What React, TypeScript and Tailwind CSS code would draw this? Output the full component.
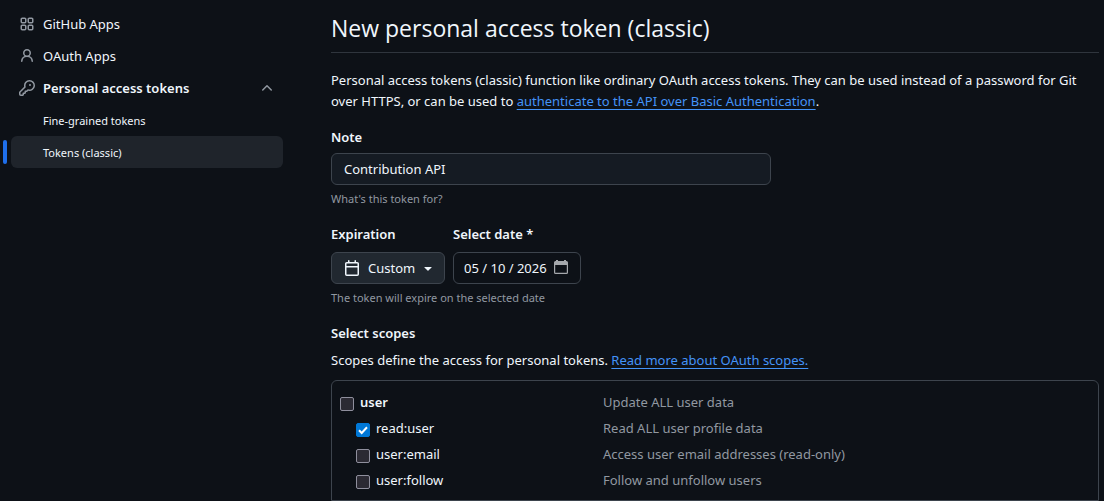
import { useState, type ReactNode } from "react";

const paths = {
  apps: "M1.5 3.25c0-.966.784-1.75 1.75-1.75h2.5c.966 0 1.75.784 1.75 1.75v2.5A1.75 1.75 0 0 1 5.75 7.5h-2.5A1.75 1.75 0 0 1 1.5 5.75Zm7 0c0-.966.784-1.75 1.75-1.75h2.5c.966 0 1.75.784 1.75 1.75v2.5a1.75 1.75 0 0 1-1.75 1.75h-2.5A1.75 1.75 0 0 1 8.5 5.75Zm-7 7c0-.966.784-1.75 1.75-1.75h2.5c.966 0 1.75.784 1.75 1.75v2.5a1.75 1.75 0 0 1-1.75 1.75h-2.5a1.75 1.75 0 0 1-1.75-1.75Zm7 0c0-.966.784-1.75 1.75-1.75h2.5c.966 0 1.75.784 1.75 1.75v2.5a1.75 1.75 0 0 1-1.75 1.75h-2.5a1.75 1.75 0 0 1-1.75-1.75ZM3.25 3a.25.25 0 0 0-.25.25v2.5c0 .138.112.25.25.25h2.5A.25.25 0 0 0 6 5.75v-2.5A.25.25 0 0 0 5.75 3Zm7 0a.25.25 0 0 0-.25.25v2.5c0 .138.112.25.25.25h2.5a.25.25 0 0 0 .25-.25v-2.5a.25.25 0 0 0-.25-.25Zm-7 7a.25.25 0 0 0-.25.25v2.5c0 .138.112.25.25.25h2.5a.25.25 0 0 0 .25-.25v-2.5a.25.25 0 0 0-.25-.25Zm7 0a.25.25 0 0 0-.25.25v2.5c0 .138.112.25.25.25h2.5a.25.25 0 0 0 .25-.25v-2.5a.25.25 0 0 0-.25-.25Z",
  person:
    "M10.561 8.073a6.005 6.005 0 0 1 3.432 5.142.75.75 0 1 1-1.498.07 4.5 4.5 0 0 0-8.99 0 .75.75 0 0 1-1.498-.07 6.004 6.004 0 0 1 3.431-5.142 3.999 3.999 0 1 1 5.123 0ZM10.5 5a2.5 2.5 0 1 0-5 0 2.5 2.5 0 0 0 5 0Z",
  key: "M10.5 0a5.499 5.499 0 1 1-1.288 10.848l-.932.932a.749.749 0 0 1-.53.22H7v.75a.749.749 0 0 1-.22.53l-.5.5a.749.749 0 0 1-.53.22H5v.75a.749.749 0 0 1-.22.53l-.5.5a.749.749 0 0 1-.53.22h-2A1.75 1.75 0 0 1 0 14.25v-2c0-.199.079-.389.22-.53l4.932-4.932A5.5 5.5 0 0 1 10.5 0Zm-4 5.5c-.001.431.069.86.205 1.269a.75.75 0 0 1-.181.768L1.5 12.56v1.69c0 .138.112.25.25.25h1.69l.06-.06v-1.19a.75.75 0 0 1 .75-.75h1.19l.06-.06v-1.19a.75.75 0 0 1 .75-.75h1.19l1.023-1.025a.75.75 0 0 1 .768-.18A4 4 0 1 0 6.5 5.5ZM11 6a1 1 0 1 1 0-2 1 1 0 0 1 0 2Z",
  calendar:
    "M4.75 0a.75.75 0 0 1 .75.75V2h5V.75a.75.75 0 0 1 1.5 0V2h1.25c.966 0 1.75.784 1.75 1.75v10.5A1.75 1.75 0 0 1 13.25 16H2.75A1.75 1.75 0 0 1 1 14.25V3.75C1 2.784 1.784 2 2.75 2H4V.75A.75.75 0 0 1 4.75 0ZM2.5 7.5v6.75c0 .138.112.25.25.25h10.5a.25.25 0 0 0 .25-.25V7.5Zm10.75-4H2.75a.25.25 0 0 0-.25.25V6h11V3.75a.25.25 0 0 0-.25-.25Z",
  chevronUp:
    "M3.22 10.53a.749.749 0 0 1 0-1.06l4.25-4.25a.749.749 0 0 1 1.06 0l4.25 4.25a.749.749 0 1 1-1.06 1.06L8 6.811 4.28 10.53a.749.749 0 0 1-1.06 0Z",
  triangleDown:
    "m4.427 7.427 3.396 3.396a.25.25 0 0 0 .354 0l3.396-3.396A.25.25 0 0 0 11.396 7H4.604a.25.25 0 0 0-.177.427Z",
  // Filled header bar with an open body
  datePicker:
    "M3 0h2v1h6V0h2v1h.500A1.500 1.500 0 0 1 15 2.500v10a1.500 1.500 0 0 1-1.500 1.500h-11A1.500 1.500 0 0 1 1 12.500v-10A1.500 1.500 0 0 1 2.500 1H3ZM2.200 5v7.800h11.600V5Z",
};

function Icon({ name, className = "" }: { name: keyof typeof paths; className?: string }) {
  return (
    <svg
      viewBox="0 0 16 16"
      aria-hidden="true"
      fill="currentColor"
      fillRule="evenodd"
      className={`size-4 shrink-0 ${className}`}
    >
      <path d={paths[name]} />
    </svg>
  );
}

const navRow = "flex h-8 w-full items-center gap-2 rounded-md px-2 text-left";

function Sidebar() {
  return (
    <nav aria-label="Developer settings" className="w-[272px] shrink-0">
      <ul>
        <li>
          <a href="#apps" className={navRow}>
            <Icon name="apps" className="text-[#9198a1]" />
            GitHub Apps
          </a>
        </li>
        <li>
          <a href="#oauth" className={navRow}>
            <Icon name="person" className="text-[#9198a1]" />
            OAuth Apps
          </a>
        </li>
        <li>
          <button type="button" aria-expanded="true" className={`${navRow} font-semibold`}>
            <Icon name="key" className="text-[#9198a1]" />
            <span className="grow">Personal access tokens</span>
            <Icon name="chevronUp" className="text-[#9198a1]" />
          </button>
          <ul className="text-[11px]">
            <li>
              <a href="#fine-grained" className="flex h-8 items-center rounded-md pl-8">
                Fine-grained tokens
              </a>
            </li>
            <li className="relative">
              <span className="absolute top-1 -left-2 h-6 w-1 rounded-md bg-[#1f6feb]" />
              <a
                href="#classic"
                aria-current="page"
                className="flex h-8 items-center rounded-md bg-[#1f242b] pl-8"
              >
                Tokens (classic)
              </a>
            </li>
          </ul>
        </li>
      </ul>
    </nav>
  );
}

function TextLink({ href, children }: { href: string; children: ReactNode }) {
  return (
    <a href={href} className="text-[#4493f8] underline underline-offset-3">
      {children}
    </a>
  );
}

const scopes = [
  { name: "user", description: "Update ALL user data", parent: true, checked: false },
  { name: "read:user", description: "Read ALL user profile data", parent: false, checked: true },
  { name: "user:email", description: "Access user email addresses (read-only)", parent: false, checked: false },
  { name: "user:follow", description: "Follow and unfollow users", parent: false, checked: false },
];

function ScopeRow({ name, description, parent, checked }: (typeof scopes)[number]) {
  const [on, setOn] = useState(checked);
  return (
    <li className="flex h-[26px] items-center">
      <label className={`flex w-[263px] shrink-0 items-center gap-1.5 ${parent ? "font-semibold" : "pl-4"}`}>
        <span className="grid pt-1">
          <input
            type="checkbox"
            checked={on}
            onChange={(e) => setOn(e.target.checked)}
            className="peer col-start-1 row-start-1 size-3.5 appearance-none rounded-xs border border-[#8f8f9d] bg-[#2b2a33] checked:border-[#0078d7] checked:bg-[#0078d7]"
          />
          <svg
            viewBox="0 0 14 14"
            aria-hidden="true"
            className="pointer-events-none invisible col-start-1 row-start-1 size-3.5 peer-checked:visible"
          >
            <path d="M3 7.300 5.700 10 11 4.300" fill="none" stroke="white" strokeWidth="2" />
          </svg>
        </span>
        {name}
      </label>
      <span className="text-[#9198a1]">{description}</span>
    </li>
  );
}

export default function App() {
  const [note, setNote] = useState("Contribution API");
  const [date, setDate] = useState("05 / 10 / 2026");

  return (
    <div className="flex min-h-screen gap-12 bg-[#0d1117] pt-2 pr-[5px] pl-[11px] font-['Noto_Sans','Open_Sans',sans-serif] text-[13px] leading-[21px] text-[#f0f6fc]">
      <Sidebar />
      <main className="min-w-0 grow">
        <h1 className="border-b border-[#2f353d] pt-1 pb-2 font-['Open_Sans','Noto_Sans',sans-serif] text-[23px] leading-8">
          New personal access token (classic)
        </h1>
        <p className="mt-[17px]">
          Personal access tokens (classic) function like ordinary OAuth access tokens. They can be used
          instead of a password for Git over HTTPS, or can be used to{" "}
          <TextLink href="#basic-auth">authenticate to the API over Basic Authentication</TextLink>.
        </p>

        <form>
          <div className="mt-[15px]">
            <label htmlFor="note" className="block font-semibold">
              Note
            </label>
            <input
              id="note"
              type="text"
              value={note}
              onChange={(e) => setNote(e.target.value)}
              aria-describedby="note-hint"
              className="mt-[5px] block h-8 w-full max-w-[440px] rounded-md border border-[#3d444d] bg-[#151b23] px-3"
            />
            <p id="note-hint" className="mt-[5px] text-[11px] leading-[18px] text-[#9198a1]">
              What's this token for?
            </p>
          </div>

          <div className="mt-4 flex gap-2">
            <div>
              <label htmlFor="expiration" className="block font-semibold">
                Expiration
              </label>
              <button
                id="expiration"
                type="button"
                aria-haspopup="menu"
                className="mt-[7px] flex h-8 w-[114px] items-center gap-2 rounded-md border border-[#3d444d] bg-[#212830] pr-2 pl-3"
              >
                <Icon name="calendar" />
                <span className="flex grow items-center justify-between">
                  Custom
                  <Icon name="triangleDown" />
                </span>
              </button>
            </div>
            <div>
              <label htmlFor="date" className="block font-semibold">
                Select date *
              </label>
              <div className="mt-[7px] flex h-8 w-32 items-center justify-between rounded-md border border-[#3d444d] pr-[11px] pl-2.5">
                <input
                  id="date"
                  type="text"
                  value={date}
                  onChange={(e) => setDate(e.target.value)}
                  className="w-[88px] bg-transparent"
                />
                <button type="button" aria-label="Open calendar" className="text-[#a5a8ac]">
                  <Icon name="datePicker" />
                </button>
              </div>
            </div>
          </div>
          <p className="mt-[5px] text-[11px] leading-[18px] text-[#9198a1]">
            The token will expire on the selected date
          </p>

          <h2 className="mt-4 font-semibold">Select scopes</h2>
          <p className="mt-1.5">
            Scopes define the access for personal tokens.{" "}
            <TextLink href="#scopes">Read more about OAuth scopes.</TextLink>
          </p>
          <ul className="mt-[9px] rounded-t-md border border-[#3d444d] px-2 pt-2 pb-[7px]">
            {scopes.map((scope) => (
              <ScopeRow key={scope.name} {...scope} />
            ))}
          </ul>
        </form>
      </main>
    </div>
  );
}
